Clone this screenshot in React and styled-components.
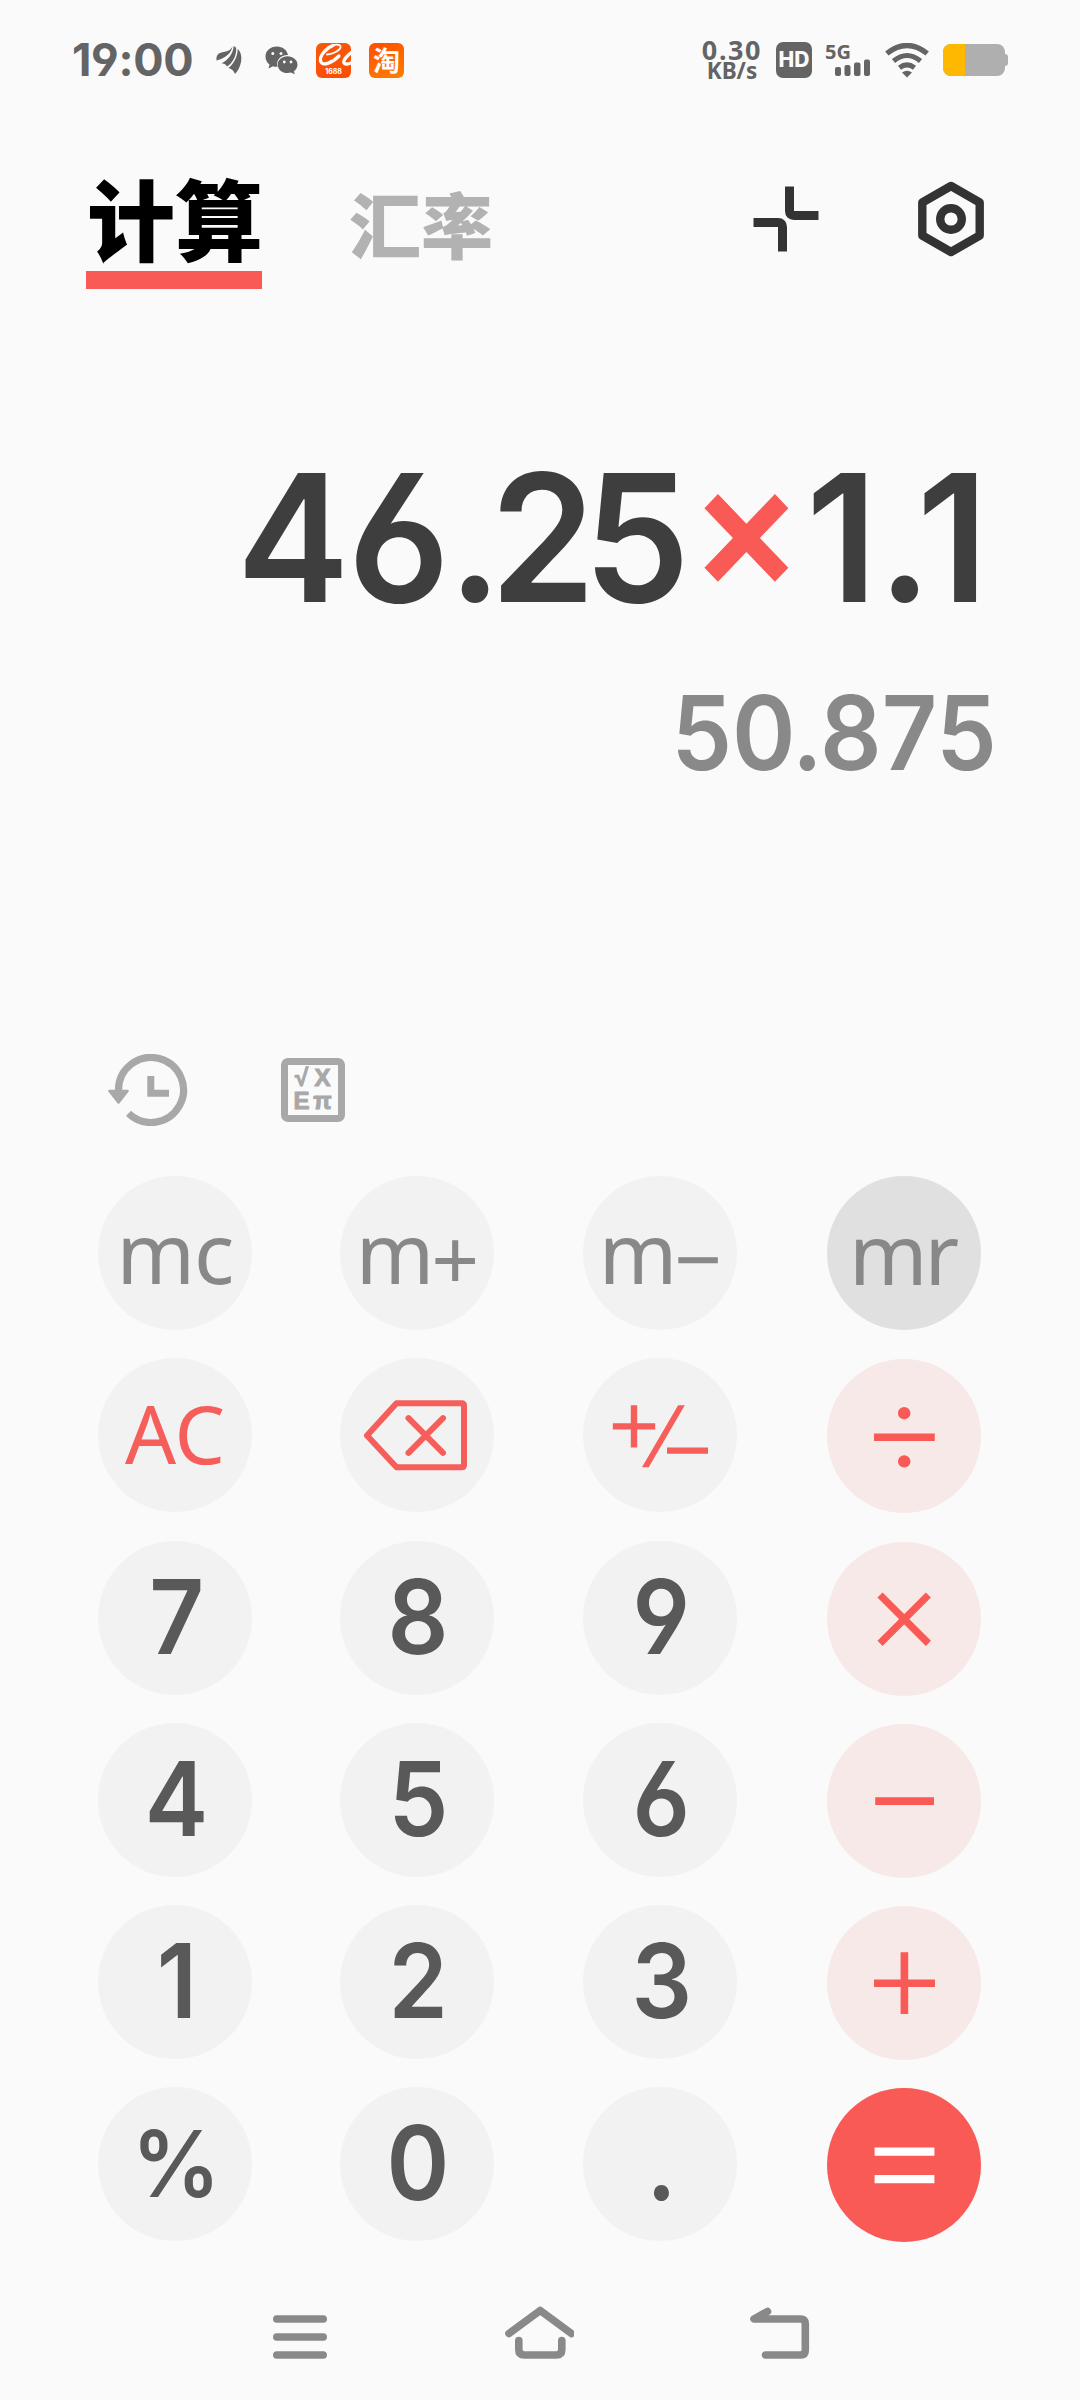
import React from 'react';
import styled, { createGlobalStyle } from 'styled-components';

const NUM_FONT = 'Inter, "Noto Sans", sans-serif';
const TEXT_FONT = '"Noto Sans", "Open Sans", sans-serif';
const CJK_FONT = '"Noto Sans CJK SC", sans-serif';

const keys = [
  { id: 'mc', label: 'mc', kind: 'memory' },
  { id: 'm+', label: 'm', sign: '+', kind: 'memory' },
  { id: 'm-', label: 'm', sign: '−', kind: 'memory' },
  { id: 'mr', label: 'mr', kind: 'recall' },
  { id: 'ac', label: 'AC', kind: 'clear' },
  { id: 'del', icon: 'del', kind: 'clear' },
  { id: 'sign', icon: 'sign', kind: 'clear' },
  { id: 'divide', icon: 'divide', kind: 'operator' },
  { id: '7', label: '7', kind: 'digit' },
  { id: '8', label: '8', kind: 'digit' },
  { id: '9', label: '9', kind: 'digit' },
  { id: 'times', icon: 'times', kind: 'operator' },
  { id: '4', label: '4', kind: 'digit' },
  { id: '5', label: '5', kind: 'digit' },
  { id: '6', label: '6', kind: 'digit' },
  { id: 'minus', icon: 'minus', kind: 'operator' },
  { id: '1', label: '1', kind: 'digit' },
  { id: '2', label: '2', kind: 'digit' },
  { id: '3', label: '3', kind: 'digit' },
  { id: 'plus', icon: 'plus', kind: 'operator' },
  { id: 'percent', label: '%', kind: 'percent' },
  { id: '0', label: '0', kind: 'digit' },
  { id: 'dot', label: '.', kind: 'digit' },
  { id: 'equals', icon: 'equals', kind: 'equals' },
];

// drawn on a 154 x 154 key, stroke colour comes from the key
const keyIcons = {
  del: (
    <g strokeWidth="6" strokeLinejoin="round">
      <path d="M27 77.5L56.5 45.3H121.5Q124 45.3 124 47.8V106.8Q124 109.3 121.5 109.3H56.5Z" />
      <path d="M68.5 60.2L103 94.8M103 60.2L68.5 94.8" strokeLinecap="round" strokeWidth="6" />
    </g>
  ),
  sign: (
    <g strokeWidth="6.4">
      <path d="M29.8 68.4H72.2M51 47.2V89.4M84 92.6H125" />
      <path d="M59 109.2H65.7L101.8 47.2H95.1Z" fill="currentColor" stroke="none" />
    </g>
  ),
  divide: (
    <g>
      <path d="M47 78.3H107.8" strokeWidth="7.5" />
      <circle cx="77.2" cy="54.2" r="6.2" fill="currentColor" stroke="none" />
      <circle cx="77.2" cy="102.4" r="6.2" fill="currentColor" stroke="none" />
    </g>
  ),
  times: <path d="M53 53L101.4 101.4M101.4 53L53 101.4" strokeWidth="7.2" />,
  minus: <path d="M48.2 77.2H107" strokeWidth="7.8" />,
  plus: <path d="M47 77.2H108M77.4 46.3V108" strokeWidth="7.6" />,
  equals: <path d="M47.6 63.7H107.4M47.6 91.2H107.4" strokeWidth="8.2" />,
};

function StatusBar() {
  return (
    <StatusRow>
      <Clock>19:00</Clock>
      <NoticeIcons>
        <svg width="26" height="30" viewBox="0 0 26 30" fill="#646464">
          <path d="M0.500 15.500C0 9 3 7.500 10 6.500C13.500 6 15 4 16.500 1.500C15.500 8 9.500 13 0.500 15.500Z" />
          <path d="M5.500 18.500C12 15 17 9 17.700 1.200C20 1.800 20.300 3 20.200 5C20 12 16 18.500 11 21.500C9.500 19 8 18 5.500 18.500Z" />
          <path d="M12.500 23C18 18.500 21.500 12 21.700 4C25 7 26 12 25 17C24 22 22 26 19 29C18 26 16 24 12.500 23Z" />
        </svg>
        <svg width="33" height="29" viewBox="0 0 33 29" fill="#646464">
          <path d="M12 0.500C5 0.500 0.500 5 0.500 10.500C0.500 14 2 16.500 4.500 18.500L3.500 22.500L8 20.200C9.500 20.600 11 20.800 12.500 20.700C10.500 14 16 8.700 23 9C22 4 17.500 0.500 12 0.500Z" />
          <path d="M22.500 10.300C17 10.300 12.700 14 12.700 18.700C12.700 23.500 17 27 22.500 27C23.800 27 25 26.800 26 26.500L29.700 28.300L28.900 25.200C31.200 23.500 32.500 21.300 32.500 18.700C32.500 14 28 10.300 22.500 10.300Z" />
          <g fill="#fafafa">
            <circle cx="7.800" cy="7.500" r="1.500" />
            <circle cx="16" cy="7.500" r="1.500" />
            <circle cx="19.300" cy="16" r="1.400" />
            <circle cx="26" cy="16" r="1.400" />
          </g>
        </svg>
        <AppBadge $from="#f8590a" $to="#fb4d05">
          <svg width="35" height="24" viewBox="0 0 35 24" fill="none" stroke="#fff" strokeLinecap="round">
            <path d="M17 2.500C10 5 3.500 13 4.500 18C6 24 16 20 23 13" strokeWidth="3.200" />
            <path d="M12 4.500C17 1 25.500 0.500 24.500 4.500C23.500 8 16 11.500 11 11.500" strokeWidth="1.800" />
            <path d="M36 9C32 12 26.500 17.500 28 20C29.500 21.500 33 21.500 36 19.500" strokeWidth="3.200" />
          </svg>
          <BadgeCaption>1688</BadgeCaption>
        </AppBadge>
        <AppBadge $from="#ff4d00" $to="#ff7f00">
          <BadgeGlyph>淘</BadgeGlyph>
        </AppBadge>
      </NoticeIcons>
      <NetSpeed>
        <span>0.30</span>
        <small>KB/s</small>
      </NetSpeed>
      <HdBadge>HD</HdBadge>
      <Signal>
        <span>5G</span>
        <svg width="35" height="17" viewBox="0 0 35 17" fill="#646464">
          <rect x="0" y="8" width="6" height="9" rx="2" />
          <rect x="9.500" y="6" width="6" height="11" rx="2" />
          <rect x="19" y="3.500" width="6.500" height="13.500" rx="2" />
          <rect x="29" y="0.500" width="6" height="16.500" rx="2" />
        </svg>
      </Signal>
      <WifiIcon width="44" height="35" viewBox="0 0 44 35" fill="none" stroke="#646464">
        <path d="M1.800 10.500Q22 -5.500 42.200 10.500" strokeWidth="5.400" />
        <path d="M8.500 18Q22 7 35.500 18" strokeWidth="5" />
        <path d="M14.500 24.800Q22 19 29.500 24.800" strokeWidth="5" />
        <path d="M17 29.500Q22 26 27 29.500L22 34.500Z" fill="#646464" stroke="none" />
      </WifiIcon>
      <Battery>
        <BatteryLevel />
      </Battery>
    </StatusRow>
  );
}

function App() {
  return (
    <>
      <GlobalStyle />
      <Screen>
        <StatusBar />

        <Header>
          <ActiveTab>计算</ActiveTab>
          <Tab>汇率</Tab>
          <HeaderIcons>
            <svg width="68" height="68" viewBox="0 0 68 68" fill="none" stroke="#333" strokeWidth="9">
              <path d="M37.500 1.500V26Q37.500 30.500 42 30.500H66.500" />
              <path d="M1.500 37.500H26Q30.500 37.500 30.500 42V66.500" />
            </svg>
            <svg width="66" height="76" viewBox="0 0 66 76" fill="none" stroke="#333" strokeWidth="8.400">
              <path d="M33 5L61.700 21.500V54.500L33 71L4.300 54.500V21.500Z" strokeLinejoin="round" />
              <circle cx="33" cy="38" r="10.800" />
            </svg>
          </HeaderIcons>
        </Header>

        <Display>
          <Expression>
            <Kern $by={-2}>46</Kern>
            <Kern $by={-12.5}>.2</Kern>5
            <Operator>×</Operator>1.1
          </Expression>
          <Result>
            5<Kern $by={-4}>0</Kern>.875
          </Result>
        </Display>

        <Tools>
          <svg width="80" height="72" viewBox="0 0 80 72">
            <path d="M10.500 38V36A32.500 32.500 0 1 1 20.500 59.400" fill="none" stroke="#a8a8a8" strokeWidth="7.200" />
            <path d="M1.500 37H19.500L10.500 48.500Z" fill="#a8a8a8" stroke="#a8a8a8" strokeWidth="2.500" strokeLinejoin="round" />
            <path d="M42.800 22V39.300H61" fill="none" stroke="#a8a8a8" strokeWidth="7" />
          </svg>
          <FormulaBox>
            <span>√</span>
            <span>X</span>
            <span>E</span>
            <span>π</span>
          </FormulaBox>
        </Tools>

        <Keypad>
          {keys.map((key) => (
            <Key key={key.id} $kind={key.kind} aria-label={key.id}>
              {key.icon ? (
                <svg width="154" height="154" viewBox="0 0 154 154" fill="none" stroke="currentColor">
                  {keyIcons[key.icon]}
                </svg>
              ) : (
                <KeyLabel $kind={key.kind}>
                  {key.label}
                  {key.sign && <MemorySign>{key.sign}</MemorySign>}
                </KeyLabel>
              )}
            </Key>
          ))}
        </Keypad>

        <NavBar>
          <svg width="54" height="54" viewBox="0 0 54 54">
            <path d="M3.800 13H50.200M3.800 31H50.200M3.800 49H50.200" />
          </svg>
          <svg width="70" height="54" viewBox="-1 0 70 54">
            <path d="M4 27.500L35.200 4.500L66.400 27.500" />
            <path d="M13.800 34.500V43.500Q13.800 49 19.300 49H51.300Q56.800 49 56.800 43.500V34.500" />
          </svg>
          <svg width="60" height="54" viewBox="0 0 60 54">
            <path d="M17.500 5.500L4 13H50.500Q55.300 13 55.300 17.800V44.200Q55.300 49 50.500 49H15.500" />
          </svg>
        </NavBar>
      </Screen>
    </>
  );
}

export default App;

const GlobalStyle = createGlobalStyle`
  * {
    box-sizing: border-box;
  }

  body {
    margin: 0;
    background-color: #fafafa;
  }

  svg {
    display: block;
    flex-shrink: 0;
  }
`;

const Screen = styled.div`
  width: 1080px;
  height: 2400px;
  display: flex;
  flex-direction: column;
  background-color: #fafafa;
  overflow: hidden;
`;

const StatusRow = styled.div`
  height: 120px;
  padding: 0 72px;
  display: flex;
  align-items: center;
  color: #646464;
  font-family: ${NUM_FONT};
`;

const Clock = styled.div`
  width: 144px;
  font-size: 45px;
  font-weight: 700;
  line-height: 60px;
  letter-spacing: -0.3px;
  font-feature-settings: 'cv03', 'cv04';
`;

const NoticeIcons = styled.div`
  display: flex;
  align-items: center;
  gap: 18px;
  width: 486px;

  svg:nth-child(2) {
    margin-left: 5px;
  }
`;

const AppBadge = styled.div`
  width: 35px;
  height: 35px;
  display: flex;
  flex-direction: column;
  align-items: center;
  justify-content: center;
  border-radius: 6px;
  color: #fff;
  background: linear-gradient(160deg, ${(props) => props.$from}, ${(props) => props.$to});
`;

const BadgeCaption = styled.span`
  font-size: 7px;
  font-weight: 700;
  line-height: 10px;
`;

const BadgeGlyph = styled.span`
  font-family: ${CJK_FONT};
  font-size: 27px;
  font-weight: 700;
  line-height: 34px;
`;

const NetSpeed = styled.div`
  width: 60px;
  display: flex;
  flex-direction: column;
  align-items: center;
  font-family: ${TEXT_FONT};
  font-weight: 700;

  span {
    font-size: 27px;
    line-height: 21px;
    letter-spacing: 1.6px;
  }

  small {
    font-size: 22.5px;
    line-height: 22px;
  }
`;

const HdBadge = styled.div`
  width: 36px;
  height: 36px;
  margin-left: 14px;
  border-radius: 7px;
  background-color: #646464;
  color: #fafafa;
  font-size: 21px;
  font-weight: 800;
  line-height: 36px;
  text-align: center;
`;

const Signal = styled.div`
  width: 46px;
  margin-left: 13px;
  display: flex;
  flex-direction: column;

  span {
    font-family: ${TEXT_FONT};
    font-size: 20px;
    font-weight: 700;
    line-height: 14px;
  }

  svg {
    margin-left: 10px;
  }
`;

const WifiIcon = styled.svg`
  margin-left: 14px;
`;

const Battery = styled.div`
  width: 62px;
  height: 32px;
  margin-left: 14px;
  position: relative;
  border-radius: 8px;
  background-color: #afafaf;

  &::after {
    content: '';
    position: absolute;
    right: -3px;
    top: 10px;
    width: 4px;
    height: 12px;
    border-radius: 0 3px 3px 0;
    background-color: #afafaf;
  }
`;

const BatteryLevel = styled.div`
  width: 22px;
  height: 100%;
  border-radius: 8px 0 0 8px;
  background-color: #ffb800;
`;

const Header = styled.div`
  height: 300px;
  padding: 50px 96px 0 86px;
  display: flex;
  align-items: flex-start;
  font-family: ${CJK_FONT};
  font-weight: 900;
`;

const ActiveTab = styled.div`
  width: 176px;
  height: 119px;
  padding: 2px 0 0 1px;
  font-size: 88px;
  line-height: 88px;
  white-space: nowrap;
  color: #000;
  border-bottom: 18px solid #fa5a55;
`;

const Tab = styled.div`
  margin: 16px auto 0 87px;
  font-size: 72px;
  line-height: 72px;
  color: #b2b2b2;
`;

const HeaderIcons = styled.div`
  display: flex;
  align-items: center;
  gap: 98px;
  margin-top: 11px;
`;

const Display = styled.div`
  height: 634px;
  padding: 18px 83px 0 0;
  display: flex;
  flex-direction: column;
  align-items: flex-end;
  font-family: ${NUM_FONT};
  font-weight: 600;
  font-feature-settings: 'cv03', 'cv04';
`;

const Expression = styled.div`
  display: flex;
  margin-right: 9px;
  font-size: 177px;
  line-height: 200px;
  white-space: nowrap;
  color: #3e3e3e;
  transform: scaleX(0.957);
  transform-origin: right;
`;

const Kern = styled.span`
  letter-spacing: ${(props) => props.$by}px;
`;

// 'case' lifts the sign to the middle of the digits
const Operator = styled.span`
  margin: 0 3px 0 -1px;
  color: #fa5a55;
  font-feature-settings: 'case';
`;

const Result = styled.div`
  margin-top: 35px;
  font-size: 103.6px;
  line-height: 120px;
  color: #898989;
  transform: scaleX(0.93);
  transform-origin: right;
`;

const Tools = styled.div`
  height: 122px;
  padding-left: 108px;
  display: flex;
  align-items: flex-start;
  gap: 93px;
`;

const FormulaBox = styled.div`
  width: 64px;
  height: 64px;
  margin-top: 4px;
  padding: 2px 3px;
  display: grid;
  grid-template-columns: 21px 21px;
  grid-auto-rows: 22.5px;
  justify-items: center;
  border: 7.5px solid #a8a8a8;
  border-radius: 7px;
  color: #a8a8a8;
  font-family: "Liberation Sans", sans-serif;
  font-size: 24px;
  font-weight: 700;
  line-height: 22px;
  -webkit-text-stroke: 1px #a8a8a8;
`;

const Keypad = styled.div`
  height: 1074px;
  padding-left: 98px;
  display: grid;
  grid-template-columns: 242px 243px 244px 154px;
  grid-template-rows: 154px 155px repeat(4, 154px);
  row-gap: 28px;
`;

const keyColors = {
  memory: ['#f2f2f2', '#888'],
  recall: ['#e0e0e0', '#888'],
  clear: ['#f2f2f2', '#f55e5a'],
  operator: ['#f7e9e7', '#fa5a55'],
  digit: ['#f2f2f2', '#595959'],
  percent: ['#f2f2f2', '#595959'],
  equals: ['#fa5a55', '#fff'],
};

const Key = styled.button`
  width: 154px;
  height: 154px;
  margin: ${(props) => (['operator', 'equals'].includes(props.$kind) ? '1px 0 -1px' : '0')};
  padding: 0;
  display: flex;
  align-items: center;
  justify-content: center;
  border: none;
  border-radius: 50%;
  background-color: ${(props) => keyColors[props.$kind][0]};
  color: ${(props) => keyColors[props.$kind][1]};
`;

const labelStyles = {
  memory: `font: 400 84px/110px ${TEXT_FONT}; padding-bottom: 3px; letter-spacing: -1px;`,
  recall: `font: 400 84px/110px ${TEXT_FONT}; padding: 0 3px 1px 0; letter-spacing: -3px;`,
  clear: `font: 400 80px/110px ${TEXT_FONT}; padding-bottom: 4px;`,
  digit: `font: 560 103.6px/120px ${NUM_FONT}; padding: 0 0 2px 3px; transform: scaleX(0.92);`,
  percent: `font: 560 92px/120px ${NUM_FONT}; padding: 0 0 1px 3px; transform: scaleX(0.96);`,
};

const KeyLabel = styled.span`
  ${(props) => labelStyles[props.$kind]}
  font-feature-settings: 'cv03', 'cv04';
`;

// plus and minus sit on the middle of the x-height
const MemorySign = styled.span`
  margin-left: -2px;
  line-height: 0;
  vertical-align: -6px;
`;

const NavBar = styled.div`
  flex: 1;
  padding: 56px 270px 0 273px;
  display: flex;
  align-items: flex-start;
  justify-content: space-between;

  path {
    fill: none;
    stroke: #898989;
    stroke-width: 7.6px;
    stroke-linecap: round;
    stroke-linejoin: round;
  }
`;
